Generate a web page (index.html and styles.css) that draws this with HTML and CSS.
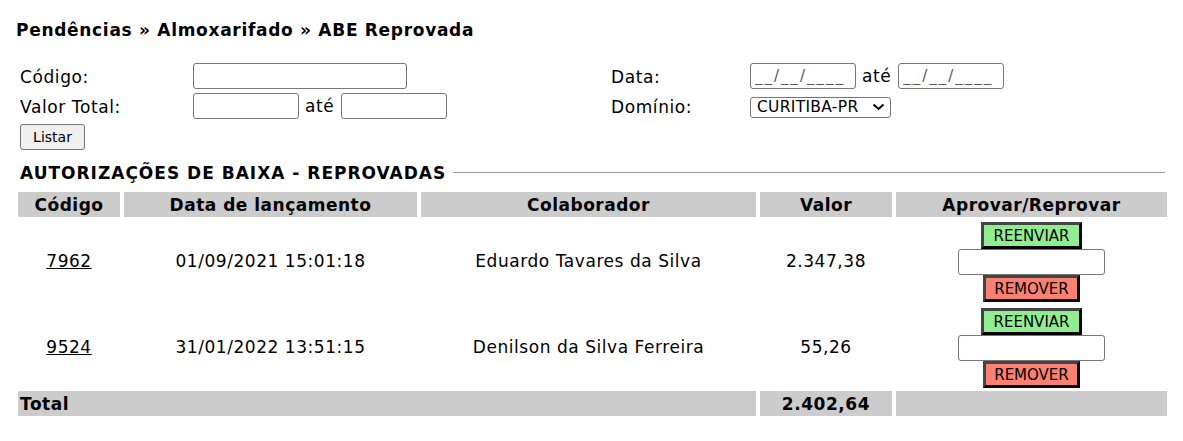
FILE: index.html
```html
<!DOCTYPE html>
<html lang="pt-BR">
<head>
<meta charset="utf-8">
<title>ABE Reprovada</title>
<link rel="stylesheet" href="styles.css">
</head>
<body>
<div class="page">
  <h1 class="title">Pendências » Almoxarifado » ABE Reprovada</h1>
  <form class="filters">
    <label class="lbl">Código:</label>
    <div class="field field-1"><input class="inp inp-code" type="text"></div>
    <label class="lbl">Data:</label>
    <div class="field field-1"><input class="inp inp-date" type="text" value="__/__/____"> <span class="ate">até</span> <input class="inp inp-date" type="text" value="__/__/____"></div>
    <label class="lbl">Valor Total:</label>
    <div class="field"><input class="inp inp-val" type="text"> <span class="ate">até</span> <input class="inp inp-val" type="text"></div>
    <label class="lbl">Domínio:</label>
    <div class="field">
      <span class="sel-wrap">
        <select class="sel"><option>CURITIBA-PR</option></select>
        <svg class="chev" width="13" height="8" viewBox="0 0 13 8"><path d="M1.5 1.5 L6.5 6 L11.5 1.5" fill="none" stroke="#000" stroke-width="2"/></svg>
      </span>
    </div>
    <div class="actions"><button type="button" class="btn-listar">Listar</button></div>
  </form>
  <div class="section">
    <span class="section-title">AUTORIZAÇÕES DE BAIXA - REPROVADAS</span>
    <span class="section-line"></span>
  </div>
  <table class="grid">
    <thead>
      <tr>
        <th class="c-cod">Código</th>
        <th class="c-data">Data de lançamento</th>
        <th class="c-col">Colaborador</th>
        <th class="c-val">Valor</th>
        <th class="c-act">Aprovar/Reprovar</th>
      </tr>
    </thead>
    <tbody>
      <tr>
        <td><a href="#" class="link">7962</a></td>
        <td>01/09/2021 15:01:18</td>
        <td>Eduardo Tavares da Silva</td>
        <td>2.347,38</td>
        <td class="act">
          <button type="button" class="b-ok">REENVIAR</button>
          <input type="text" class="inp-obs">
          <button type="button" class="b-rm">REMOVER</button>
        </td>
      </tr>
      <tr>
        <td><a href="#" class="link">9524</a></td>
        <td>31/01/2022 13:51:15</td>
        <td>Denilson da Silva Ferreira</td>
        <td>55,26</td>
        <td class="act">
          <button type="button" class="b-ok">REENVIAR</button>
          <input type="text" class="inp-obs">
          <button type="button" class="b-rm">REMOVER</button>
        </td>
      </tr>
    </tbody>
    <tfoot>
      <tr>
        <td colspan="3" class="tot-lbl">Total</td>
        <td class="tot-val">2.402,64</td>
        <td></td>
      </tr>
    </tfoot>
  </table>
</div>
</body>
</html>
```
FILE: styles.css
```css
* { box-sizing: border-box; }
html, body { margin: 0; padding: 0; background: #fff; }
body {
  font-family: "DejaVu Sans", Verdana, sans-serif;
  font-size: 17px;
  letter-spacing: 0.55px;
  color: #000;
}
.page { padding: 18px 16px 0 14px; }
.title {
  font-size: 17px;
  font-weight: bold;
  letter-spacing: 0.7px;
  margin: 0 0 0 2px;
  line-height: 24px;
}
.filters {
  display: grid;
  grid-template-columns: 173px 418px 139px auto;
  margin: 21px 0 0 6px;
  align-items: start;
}
.lbl { font-size: 17px; letter-spacing: 0.6px; line-height: 20px; padding-top: 4px; }
.field { display: flex; align-items: center; }
.field-1 { margin-bottom: 4px; }
.inp {
  height: 26px;
  border: 1px solid #767676;
  border-radius: 3px;
  font-family: "DejaVu Sans", sans-serif;
  font-size: 14px;
  letter-spacing: 0;
  padding: 1px 6px;
  background: #fff;
}
.inp-code { width: 214px; }
.inp-val { width: 106px; }
.inp-date { width: 106px; color: #555; font-size: 15px; letter-spacing: 2px; padding: 1px 4px; }
.ate { margin: 0 7px 0 6px; }
.sel-wrap { position: relative; display: inline-block; margin-top: 4px; }
.sel {
  display: block;
  height: 21px;
  width: 141px;
  font-family: "DejaVu Sans", sans-serif;
  font-size: 15.5px;
  letter-spacing: 0.3px;
  line-height: 19px;
  border: 1px solid #767676;
  border-radius: 3px;
  background: #fff;
  color: #000;
  padding: 0 0 0 6px;
  -webkit-appearance: none;
  appearance: none;
}
.chev { position: absolute; right: 6px; top: 6px; pointer-events: none; }
.actions { grid-column: 1 / -1; padding-top: 5px; }
.btn-listar {
  height: 26px;
  width: 65px;
  font-family: "DejaVu Sans", sans-serif;
  font-size: 14px;
  background: #efefef;
  border: 1px solid #767676;
  border-radius: 3px;
  padding: 0;
  color: #000;
}
.section {
  display: flex;
  align-items: center;
  margin: 11px 2px 0 6px;
}
.section-title { font-weight: bold; font-size: 17px; letter-spacing: 1px; line-height: 24px; }
.section-line { flex: 1; height: 1px; background: #999; margin-left: 7px; margin-top: -2px; }
.grid {
  border-collapse: separate;
  border-spacing: 4px 2px;
  width: 1157px;
  margin: 5px 0 0 0;
}
.grid th {
  background: #ccc;
  font-weight: bold;
  height: 25px;
  padding: 0;
  font-size: 17px;
  letter-spacing: 0.5px;
}
.c-cod { width: 102px; }
.c-data { width: 293px; }
.c-col { width: 335px; }
.c-val { width: 132px; }
.grid td { text-align: center; padding: 0; }
.link { color: #000; text-decoration: underline; }
.grid td.act { padding: 3px 0 1px; }
.b-ok, .b-rm {
  display: block;
  margin: 0 auto;
  font-family: "DejaVu Sans", sans-serif;
  font-size: 15px;
  letter-spacing: 0;
  height: 27px;
  border: 3px outset #444;
  color: #000;
  padding: 0;
}
.b-ok { background: #90ee90; width: 101px; }
.b-rm { background: #fa8072; width: 97px; }
.inp-obs {
  display: block;
  margin: 0 auto;
  width: 147px;
  height: 26px;
  border: 1px solid #767676;
  border-radius: 3px;
}
tfoot td { background: #ccc; height: 25px; font-weight: bold; }
.grid td.tot-lbl { text-align: left; padding-left: 2px; }
```
